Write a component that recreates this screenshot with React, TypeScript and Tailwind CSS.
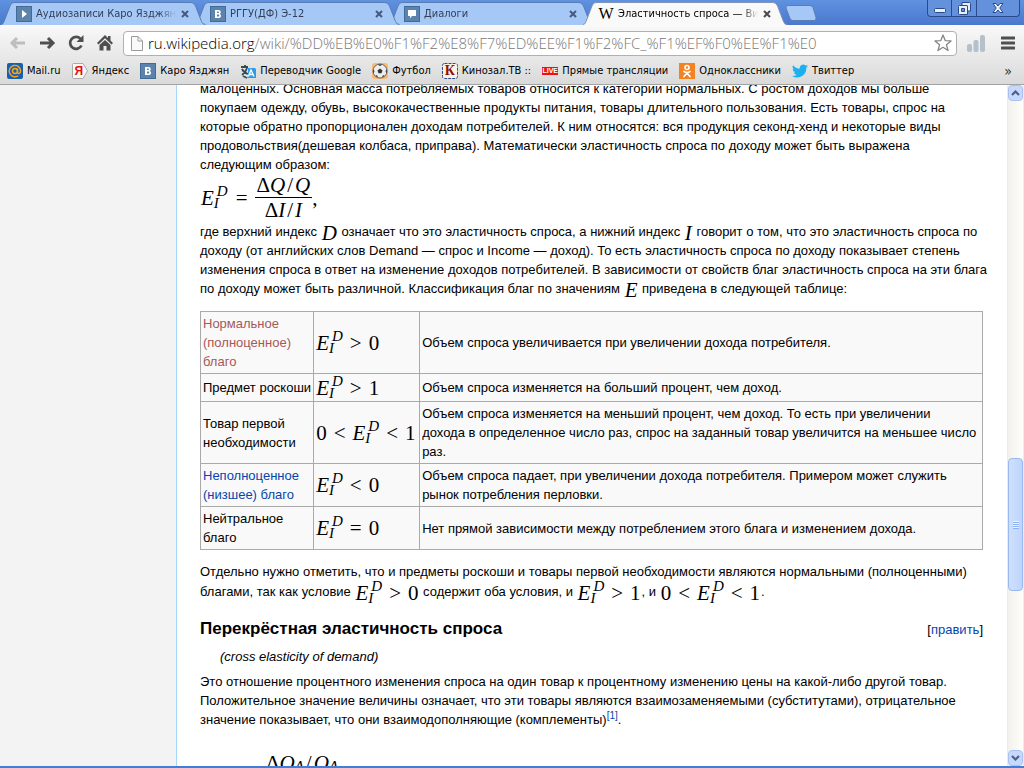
import { ReactNode } from "react";

interface TabProps {
  title: string;
  icon: ReactNode;
  active?: boolean;
  layer: string;
}

const Close = ({ active }: { active?: boolean }) => (
  <svg viewBox="0 0 8 8" className="h-2 w-2">
    <path d="M1 1l6 6M7 1l-6 6" stroke={active ? "#4a4a4a" : "#47597a"} strokeWidth="2" />
  </svg>
);

const VkBox = ({ children }: { children: ReactNode }) => (
  <svg viewBox="0 0 16 16" className="h-4 w-4 shrink-0">
    <rect x=".5" y=".5" width="15" height="15" fill="#5b83ab" stroke="#416a96" />
    {children}
  </svg>
);

const VkIcon = () => (
  <VkBox>
    <path d="M5 4v8h3.800q2.300 0 2.300-2.200 0-1.500-1.400-1.900 1.100-.4 1.100-1.700 0-2.200-2.200-2.200zM7 5.500h1.200q.8 0 .8.800t-.8.800H7zm0 3.100h1.500q.8 0 .8.900t-.8.900H7z" fill="#fff" fillRule="evenodd" />
  </VkBox>
);

const Tab = ({ title, icon, active, layer }: TabProps) => {
  const fill = active ? "#f9f9f9" : "#a6c8f6";
  const stroke = active ? "#7f95bb" : "#5c7db4";
  return (
    <div className={`relative -mr-[11px] flex h-[23px] w-[205px] min-w-0 ${layer}`}>
      <svg viewBox="0 0 15 23" className="h-[23px] w-[15px] shrink-0">
        <path d="M0 23q2 0 3-3l6-16q1-3.500 4-3.500h2V23z" fill={fill} />
        <path d="M0 22.500q2 0 3-3l6-15.500q1-3.500 4-3.500h2" fill="none" stroke={stroke} />
      </svg>
      <div className={`flex min-w-0 grow items-center border-t ${active ? "border-[#7f95bb] bg-[#f9f9f9]" : "border-[#5c7db4] bg-[#a6c8f6]"}`}>
        {icon}
        <button role="tab" className={`ml-1 w-[140px] overflow-hidden whitespace-nowrap text-left text-[11px] leading-4 [mask-image:linear-gradient(to_right,black_88%,transparent)] ${active ? "text-black" : "text-[#333f55]"}`}>
          {title}
        </button>
        <button aria-label="Закрыть" className="ml-auto">
          <Close active={active} />
        </button>
      </div>
      <svg viewBox="0 0 17 23" className="h-[23px] w-[17px] shrink-0">
        <path d="M0 .5h2q3 0 4.500 3.500l6 16q1 3 4 3H0z" fill={fill} />
        <path d="M0 .5h2q3 0 4.500 3.500l6 15.500q1 3 4 3" fill="none" stroke={stroke} />
      </svg>
    </div>
  );
};

const bookmarks: { title: string; icon: ReactNode }[] = [
  {
    title: "Mail.ru",
    icon: (
      <svg viewBox="0 0 16 16" className="h-4 w-4">
        <rect width="16" height="16" rx="2" fill="#1560b0" />
        <circle cx="8" cy="8" r="2.500" fill="none" stroke="#fba51a" strokeWidth="1.500" />
        <path d="M10.500 5.500v3.800q.2 1.400 1.600 1.200 1.500-.5 1.500-2.500a5.700 5.700 0 1 0-2.500 4.800" fill="none" stroke="#fba51a" strokeWidth="1.400" />
      </svg>
    ),
  },
  {
    title: "Яндекс",
    icon: (
      <span className="relative flex h-4 w-4 items-center">
        <svg viewBox="0 0 16 16" className="h-4 w-4">
          <path d="M1.500.5h9.500L15.500 8 11 15.500H1.500q-1 0-1-1v-13q0-1 1-1z" fill="#f7f7f7" stroke="#aaa" />
        </svg>
        <b className="absolute left-[3px] top-0 font-[Liberation_Sans,sans-serif] text-xs leading-4 text-[#e01010]">Я</b>
      </span>
    ),
  },
  { title: "Каро Язджян", icon: <VkIcon /> },
  {
    title: "Переводчик Google",
    icon: (
      <svg viewBox="0 0 16 16" className="h-4 w-4">
        <path d="M0 2q4-2 10-1v9l-1 5H4l-3-5z" fill="#e9e4cf" />
        <path d="M1 4h7M5 2v2M2 6q2 4 6 5M7 5q-1 4-5 7M3 13l4 2" fill="none" stroke="#2d4a66" strokeWidth="1.800" />
        <path d="M8 5h6.500q1.500 0 1.500 1.500V15H6q3-1 2-4z" fill="#2f9be8" />
        <path d="M8.500 13.500l2.500-6.500 3 6.500M9.500 11.500h4" fill="none" stroke="#fff" strokeWidth="1.300" />
      </svg>
    ),
  },
  {
    title: "Футбол",
    icon: (
      <svg viewBox="0 0 16 16" className="h-4 w-4">
        <rect width="16" height="16" rx="3" fill="#f6b877" />
        <circle cx="8" cy="8" r="7" fill="#eee" stroke="#666" />
        <path d="M8 5.500l2.500 2-1 2.800h-3l-1-2.800zM5.500 1.500h5L8 3zM1 6.500l1.500 1.500L1.500 11zM15 6.500L13.500 8l1 3zM5 12l1 2.500-2.500-1.500zM11 12l-1 2.500 2.500-1.500z" fill="#333" />
      </svg>
    ),
  },
  {
    title: "Кинозал.ТВ ::",
    icon: (
      <span className="relative flex h-4 w-4 items-center justify-center">
        <svg viewBox="0 0 16 16" className="absolute inset-0 h-4 w-4">
          <rect x=".5" y=".5" width="15" height="15" rx="2" fill="#fbf3e0" stroke="#2c4a8f" strokeDasharray="3 1" />
        </svg>
        <b className="relative font-[Liberation_Serif,serif] text-sm leading-none text-[#8b1010]">К</b>
      </span>
    ),
  },
  {
    title: "Прямые трансляции",
    icon: <span className="flex h-2 w-4 items-center justify-center bg-[#f01010] font-[Liberation_Sans,sans-serif] text-[7px] font-bold leading-none text-white">LIVE</span>,
  },
  {
    title: "Одноклассники",
    icon: (
      <svg viewBox="0 0 16 16" className="h-4 w-4">
        <rect width="16" height="16" fill="#f58220" />
        <circle cx="8" cy="4.500" r="2" fill="none" stroke="#fff" strokeWidth="1.600" />
        <path d="M5 8.500q3 2 6 0M8 10l-3 3.500M8 10l3 3.500" fill="none" stroke="#fff" strokeWidth="1.700" strokeLinecap="round" />
      </svg>
    ),
  },
  {
    title: "Твиттер",
    icon: (
      <svg viewBox="0 0 24 24" className="h-4 w-4">
        <path d="M24 4.600a10 10 0 0 1-2.800.8 5 5 0 0 0 2.100-2.700 10 10 0 0 1-3.100 1.200 4.900 4.900 0 0 0-8.400 4.500A14 14 0 0 1 1.700 3.200a4.900 4.900 0 0 0 1.500 6.500 5 5 0 0 1-2.200-.6 4.900 4.900 0 0 0 3.900 4.900 5 5 0 0 1-2.200.1 4.900 4.900 0 0 0 4.600 3.400A10 10 0 0 1 0 19.500 14 14 0 0 0 21.500 7.100 10 10 0 0 0 24 4.600z" fill="#1cb0f0" />
      </svg>
    ),
  },
];

const Browser = () => (
  <header className="shrink-0 font-[DejaVu_Sans_Condensed,Tahoma,sans-serif]">
    <div className="flex h-[25px] items-end justify-between bg-linear-to-b from-[#5f92e0] to-[#4a78cd]">
      <div role="tablist" className="flex h-6 min-w-0 items-end pl-px">
        <Tab
          title="Аудиозаписи Каро Язджян"
          layer="z-30"
          icon={
            <VkBox>
              <path d="M6 4l5 4-5 4z" fill="#fff" />
            </VkBox>
          }
        />
        <Tab title="РГГУ(ДФ) Э-12" layer="z-20" icon={<VkIcon />} />
        <Tab
          title="Диалоги"
          layer="z-10"
          icon={
            <VkBox>
              <path d="M4 4h8v6H8l-2 2.500V10H4z" fill="#fff" />
            </VkBox>
          }
        />
        <Tab
          active
          title="Эластичность спроса — Вики"
          layer="z-40"
          icon={<span className="flex h-4 w-4 shrink-0 items-center justify-center font-[Liberation_Serif,serif] text-base leading-none">W</span>}
        />
        <button aria-label="Новая вкладка" className="mb-1 ml-2 self-end">
          <svg viewBox="0 0 32 16" className="h-4 w-8">
            <path d="M3 .5h22q2 0 3 2l3 10q.5 3-2 3H8q-2 0-3-2L1 3Q.5.5 3 .5z" fill="#a6c8f6" stroke="#5c7db4" />
          </svg>
        </button>
      </div>
      <div className="mr-1 flex h-[17px] shrink-0 self-start divide-x divide-[#2a4a8c] rounded-b border border-t-0 border-[#2a4a8c] bg-[#6391dc]">
        <button aria-label="Свернуть" className="flex w-6 items-center justify-center pt-1">
          <svg viewBox="0 0 12 5" className="h-[5px] w-3">
            <rect x=".5" y=".5" width="11" height="4" rx="1" fill="#e8effa" stroke="#2a4a8c" />
          </svg>
        </button>
        <button aria-label="Развернуть" className="flex w-[25px] items-center justify-center">
          <svg viewBox="0 0 13 13" className="h-[13px] w-[13px]">
            <path d="M4 .5h7.500q1 0 1 1V9h-8.500z" fill="#e8effa" stroke="#2a4a8c" />
            <path d="M.5 4.500q0-1 1-1H9q.5 0 .5.500v8.500h-8q-1 0-1-1z" fill="#e8effa" stroke="#2a4a8c" />
            <path d="M3.500 6.500h3v3h-3z" fill="#6391dc" stroke="#2a4a8c" />
          </svg>
        </button>
        <button aria-label="Закрыть окно" className="flex w-[42px] items-center justify-center">
          <svg viewBox="0 0 12 10" className="h-[10px] w-3">
            <path d="M1 .5h3l2 2.500L8 .5h3L7.800 5 11 9.500H8L6 7 4 9.500H1L4.200 5z" fill="#e8effa" stroke="#2a4a8c" />
          </svg>
        </button>
      </div>
    </div>

    <div className="border-b border-[#a3a3a3] bg-linear-to-b from-[#f9f9f9] to-[#dadada]">
      <div className="flex h-9 items-center pl-[9px]">
        <button aria-label="Назад" className="mr-[13px]">
          <svg viewBox="0 0 17 14" className="h-[14px] w-[17px]">
            <path d="M16 7H3M8 2L3 7l5 5" fill="none" stroke="#bdbdbd" strokeWidth="3" />
          </svg>
        </button>
        <button aria-label="Вперёд" className="mr-3">
          <svg viewBox="0 0 17 14" className="h-[14px] w-[17px]">
            <path d="M1 7h13M9 2l5 5-5 5" fill="none" stroke="#4f4f4f" strokeWidth="3" />
          </svg>
        </button>
        <button aria-label="Обновить" className="mr-[13px]">
          <svg viewBox="0 0 16 16" className="h-4 w-4">
            <path d="M12.500 3.800A6 6 0 1 0 13.500 10.500" fill="none" stroke="#4f4f4f" strokeWidth="2.700" />
            <path d="M15.500 0v7H8.500z" fill="#4f4f4f" />
          </svg>
        </button>
        <button aria-label="Домашняя страница">
          <svg viewBox="0 0 16 16" className="h-4 w-4">
            <path d="M8 0l3 3V1h2.500v4.500L16 8l-1.500 1.500L8 3.300 1.500 9.500 0 8z" fill="#4f4f4f" />
            <path d="M8 5l5.500 5v5.500h-4V11h-3v4.500h-4V10z" fill="#4f4f4f" />
          </svg>
        </button>
        <div className="ml-[10px] flex h-[25px] min-w-0 grow items-center rounded-sm border border-[#b0b0b0] bg-white px-1">
          <svg viewBox="0 0 12 15" className="ml-[3px] mr-[5px] h-[15px] w-3 shrink-0">
            <path d="M.5.5H7L11.500 5v9.500H.5zM7 .5V5h4.500" fill="#fafafa" stroke="#9a9a9a" />
          </svg>
          <div role="textbox" aria-label="Адрес" className="min-w-0 grow overflow-hidden whitespace-nowrap font-[Open_Sans,sans-serif] text-[15px] font-light leading-5 text-[#777]">
            <span className="text-black">ru.wikipedia.org</span>/wiki/%DD%EB%E0%F1%F2%E8%F7%ED%EE%F1%F2%FC_%F1%EF%F0%EE%F1%E0
          </div>
          <button aria-label="Добавить в закладки">
            <svg viewBox="0 0 18 18" className="h-[18px] w-[18px]">
              <path d="M9 1l2.200 5.600 5.800.3-4.500 3.900 1.500 5.700L9 13.300 4 16.500l1.500-5.700L1 6.900l5.800-.3z" fill="#fff" stroke="#858585" strokeWidth="1.300" strokeLinejoin="round" />
            </svg>
          </button>
        </div>
        <button aria-label="Расширение" className="ml-[10px]">
          <svg viewBox="0 0 18 17" className="h-[17px] w-[18px]">
            <rect y="9" width="5" height="8" rx="2" fill="#b4c0ca" />
            <rect x="6.500" y="5" width="5" height="12" rx="2" fill="#b4c0ca" />
            <rect x="13" width="5" height="17" rx="2" fill="#b4c0ca" />
          </svg>
        </button>
        <button aria-label="Меню" className="ml-4 mr-[9px]">
          <svg viewBox="0 0 14 14" className="h-[14px] w-[14px]">
            <path d="M1 2h12M1 7h12M1 12h12" stroke="#4f4f4f" strokeWidth="3" strokeLinecap="round" />
          </svg>
        </button>
      </div>
      <nav className="flex h-[23px] items-center gap-[11px] pb-1 pl-[7px] pr-3">
        {bookmarks.map((bookmark) => (
          <a key={bookmark.title} href="#" className="flex items-center gap-1 whitespace-nowrap text-[11px] leading-4 text-black">
            {bookmark.icon}
            {bookmark.title}
          </a>
        ))}
        <button aria-label="Другие закладки" className="ml-auto text-sm leading-4 text-[#333]">
          »
        </button>
      </nav>
    </div>
  </header>
);

const Scripts = ({ sup, sub }: { sup?: string; sub: string }) => (
  <span className="inline-flex flex-col pb-[2px] text-[15px] italic leading-3">
    <span className="pl-[3px]">{sup}</span>
    <span>{sub}</span>
  </span>
);

const Formula = ({ children }: { children: ReactNode }) => (
  <span className="inline-flex h-4 items-center whitespace-nowrap px-px align-middle font-[Liberation_Serif,serif] text-[21px] leading-4">{children}</span>
);

const Elasticity = ({ before, after }: { before?: string; after?: string }) => (
  <Formula>
    {before && (
      <>
        {before}
        <span className="mx-[7px]">&lt;</span>
      </>
    )}
    <i>E</i>
    <Scripts sup="D" sub="I" />
    {after && (
      <>
        <span className="mx-[7px]">{after[0]}</span>
        {after.slice(1)}
      </>
    )}
  </Formula>
);

const Slash = () => <span className="mx-[2px]">/</span>;

const Fraction = ({ top, bottom }: { top: ReactNode; bottom: ReactNode }) => (
  <span className="inline-flex flex-col items-center">
    <span className="flex h-6 items-center border-b border-black px-[2px]">{top}</span>
    <span className="flex h-6 items-center">{bottom}</span>
  </span>
);

const goods: { name: ReactNode; before?: string; after: string; text: ReactNode }[] = [
  {
    name: (
      <a href="#" className="text-[#a55858]">
        Нормальное (полноценное) благо
      </a>
    ),
    after: ">0",
    text: "Объем спроса увеличивается при увеличении дохода потребителя.",
  },
  { name: <span className="whitespace-nowrap">Предмет роскоши</span>, after: ">1", text: "Объем спроса изменяется на больший процент, чем доход." },
  {
    name: "Товар первой необходимости",
    before: "0",
    after: "<1",
    text: (
      <>
        Объем спроса изменяется на меньший процент, чем доход. То есть при увеличении
        <br />
        дохода в определенное число раз, спрос на заданный товар увеличится на меньшее число
        <br />
        раз.
      </>
    ),
  },
  {
    name: (
      <a href="#" className="text-[#0645ad]">
        Неполноценное (низшее) благо
      </a>
    ),
    after: "<0",
    text: "Объем спроса падает, при увеличении дохода потребителя. Примером может служить рынок потребления перловки.",
  },
  { name: "Нейтральное благо", after: "=0", text: "Нет прямой зависимости между потреблением этого блага и изменением дохода." },
];

const Article = () => (
  <main className="min-w-0 grow overflow-hidden border-l border-[#a7d7f9] bg-white pl-[23px] pr-6 font-[Liberation_Sans,Arial,sans-serif] text-[13px] leading-[19px] text-black">
    {/* the page is scrolled, so the first line is partly under the toolbar */}
    <p className="-mt-[6px]">
      малоценных. Основная масса потребляемых товаров относится к категории нормальных. С ростом доходов мы больше
      <br />
      покупаем одежду, обувь, высококачественные продукты питания, товары длительного пользования. Есть товары, спрос на
      <br />
      которые обратно пропорционален доходам потребителей. К ним относятся: вся продукция секонд-хенд и некоторые виды
      <br />
      продовольствия(дешевая колбаса, приправа). Математически эластичность спроса по доходу может быть выражена
      <br />
      следующим образом:
    </p>
    <div className="flex h-12 items-center font-[Liberation_Serif,serif] text-[21px] leading-none">
      <Elasticity />
      <span className="mx-[7px]">=</span>
      <Fraction
        top={
          <>
            Δ<i>Q</i>
            <Slash />
            <i>Q</i>
          </>
        }
        bottom={
          <>
            Δ<i>I</i>
            <Slash />
            <i>I</i>
          </>
        }
      />
      ,
    </div>
    <p className="whitespace-nowrap">
      где верхний индекс{" "}
      <Formula>
        <i>D</i>
      </Formula>{" "}
      означает что это эластичность спроса, а нижний индекс{" "}
      <Formula>
        <i>I</i>
      </Formula>{" "}
      говорит о том, что это эластичность спроса по
      <br />
      доходу (от английских слов Demand — спрос и Income — доход). То есть эластичность спроса по доходу показывает степень
      <br />
      изменения спроса в ответ на изменение доходов потребителей. В зависимости от свойств благ эластичность спроса на эти блага
      <br />
      по доходу может быть различной. Классификация благ по значениям{" "}
      <Formula>
        <i>E</i>
      </Formula>{" "}
      приведена в следующей таблице:
    </p>

    <table className="mb-3 mt-[13px] w-full border-collapse bg-[#f9f9f9]">
      <tbody>
        {goods.map((good) => (
          <tr key={good.after + (good.before ?? "")} className="h-7">
            <td className="w-[113px] border border-[#aaa] p-[2px]">{good.name}</td>
            <td className="w-[106px] border border-[#aaa] px-px py-[2px] leading-none">
              <Elasticity before={good.before} after={good.after} />
            </td>
            <td className="border border-[#aaa] p-[2px]">{good.text}</td>
          </tr>
        ))}
      </tbody>
    </table>

    <p className="leading-5">
      Отдельно нужно отметить, что и предметы роскоши и товары первой необходимости являются нормальными (полноценными)
      <br />
      благами, так как условие <Elasticity after=">0" /> содержит оба условия, и <Elasticity after=">1" />, и <Elasticity before="0" after="<1" />.
    </p>

    <div className="mt-[15px] flex items-center justify-between">
      <h3 className="text-[17px] font-bold leading-6">Перекрёстная эластичность спроса</h3>
      <span>
        [
        <a href="#" className="text-[#0645ad]">
          править
        </a>
        ]
      </span>
    </div>
    <p className="ml-5 mt-[6px] italic">(cross elasticity of demand)</p>
    <p className="mt-[6px]">
      Это отношение процентного изменения спроса на один товар к процентному изменению цены на какой-либо другой товар.
      <br />
      Положительное значение величины означает, что эти товары являются взаимозаменяемыми (субститутами), отрицательное
      <br />
      значение показывает, что они взаимодополняющие (комплементы)
      <sup className="text-[10px] leading-none">
        <a href="#" className="text-[#0645ad]">
          [1]
        </a>
      </sup>
      .
    </p>
    <div className="ml-16 mt-[22px] flex items-center pl-[2px] font-[Liberation_Serif,serif] text-[21px] leading-6">
      Δ<i>Q</i>
      <sub className="text-[15px] italic leading-none">A</sub>
      <Slash />
      <i>Q</i>
      <sub className="text-[15px] italic leading-none">A</sub>
    </div>
  </main>
);

const ScrollArrow = ({ label, d }: { label: string; d: string }) => (
  <button aria-label={label} className="flex h-4 w-[15px] shrink-0 items-center justify-center rounded-sm border border-[#a9c1f2] bg-[#c6d8fc]">
    <svg viewBox="0 0 9 6" className="h-[6px] w-[9px]">
      <path d={d} fill="none" stroke="#4d6185" strokeWidth="2.200" />
    </svg>
  </button>
);

const ScrollBar = () => (
  <div className="flex w-[17px] shrink-0 flex-col items-center border-x border-[#eeede5] bg-linear-to-r from-[#f3f1ec] to-[#fefefb]">
    <ScrollArrow label="Вверх" d="M1 5l3.500-3.500L8 5" />
    <div className="grow-[357] basis-0" />
    <div className="flex h-[133px] w-[15px] shrink-0 flex-col items-center justify-center gap-px rounded-sm border border-[#98b8f0] bg-linear-to-r from-[#cfe0fe] to-[#bfd5fc]">
      {[0, 1, 2, 3].map((grip) => (
        <span key={grip} className="h-px w-[6px] bg-[#eef4fe] shadow-[0_1px_0_#8cb0f8]" />
      ))}
    </div>
    <div className="grow-[159] basis-0" />
    <ScrollArrow label="Вниз" d="M1 1l3.500 3.500L8 1" />
  </div>
);

const App = () => (
  <div className="flex h-screen flex-col overflow-hidden border-b-2 border-[#3f7fdc]">
    <Browser />
    <div className="flex min-h-0 grow">
      <aside className="w-44 shrink-0 bg-[#f3f3f3]" />
      <Article />
      <ScrollBar />
    </div>
  </div>
);

export default App;
